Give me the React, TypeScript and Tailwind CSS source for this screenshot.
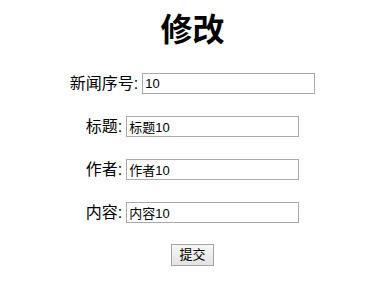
import React, { useState } from 'react';

const rows = [
  { label: '新闻序号:', name: 'id', value: '10' },
  { label: '标题:', name: 'title', value: '标题10' },
  { label: '作者:', name: 'author', value: '作者10' },
  { label: '内容:', name: 'content', value: '内容10' },
];

const App: React.FC = () => {
  const [values, setValues] = useState<Record<string, string>>(
    Object.fromEntries(rows.map((r) => [r.name, r.value]))
  );

  return (
    <div
      className="min-h-[304px] bg-white pl-[9px] text-black"
      style={{ fontFamily: '"Liberation Sans", "Noto Sans CJK SC", sans-serif' }}
    >
      <h1 className="pt-[14px] text-center text-[32px] leading-[32px] font-bold">修改</h1>

      <form className="mt-[27px] flex flex-col items-center gap-[22px]" onSubmit={(e) => e.preventDefault()}>
        {rows.map((row) => (
          <div key={row.name} className="flex h-[21px] items-center text-[16px] leading-[21px]">
            <span className="mr-[4px]">{row.label}</span>
            <input
              type="text"
              name={row.name}
              value={values[row.name]}
              onChange={(e) => setValues({ ...values, [row.name]: e.target.value })}
              className="h-[21px] w-[173px] border border-[#a9a9a9] bg-white px-[2px] text-[13px] leading-[17px] text-black outline-none"
            />
          </div>
        ))}

        <button
          type="submit"
          className="-mt-[1px] h-[22px] w-[43px] border border-[#a3a3a3] bg-gradient-to-b from-[#f6f6f6] to-[#e3e3e3] text-[13px] leading-[20px] text-black"
        >
          提交
        </button>
      </form>
    </div>
  );
};

export default App;
